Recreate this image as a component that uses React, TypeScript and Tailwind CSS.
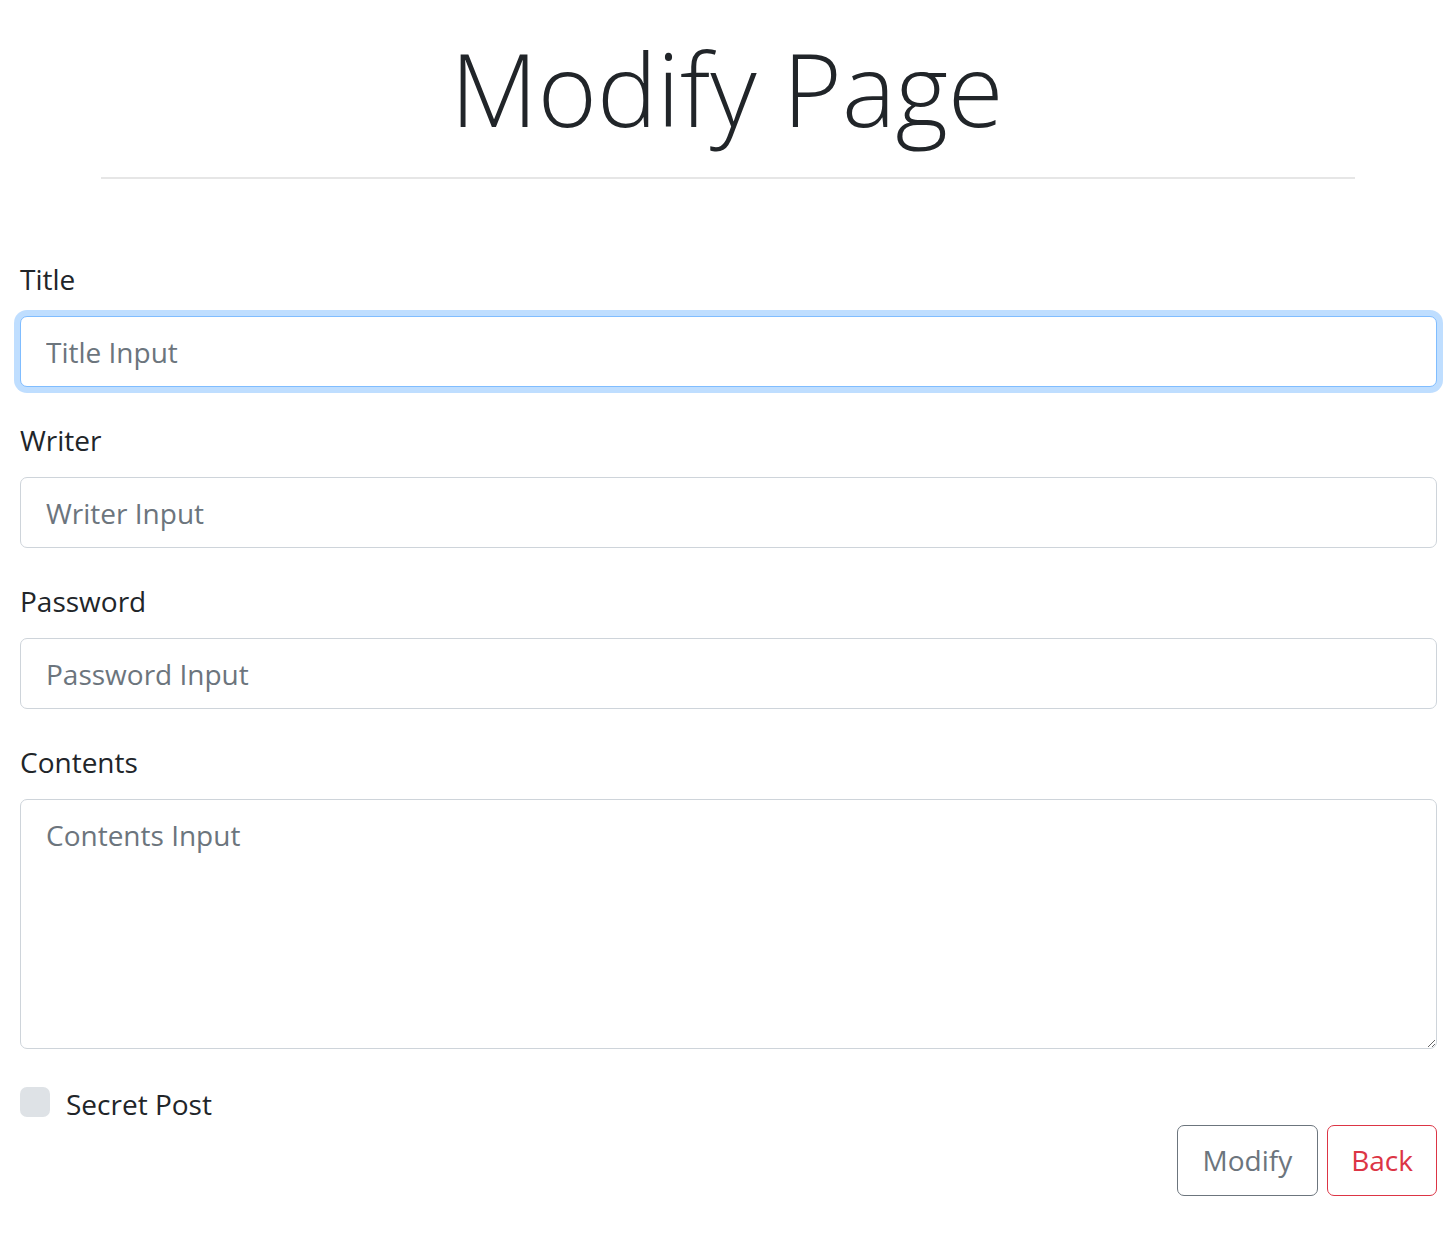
import React from 'react';

const fields = [
    { label: 'Title', placeholder: 'Title Input', focused: true },
    { label: 'Writer', placeholder: 'Writer Input', focused: false },
    { label: 'Password', placeholder: 'Password Input', focused: false },
];

const inputBase =
    'block w-full h-[71px] px-[25px] text-[28px] leading-[45px] text-[#495057] bg-white border rounded-[7px] outline-none placeholder:text-[#6c757d]';

const App: React.FC = () => {
    return (
        <div className="min-h-[1240px] bg-white text-[#212529] font-['Open_Sans',sans-serif]">
            <div className="pt-[25px]">
                <h1 className="text-center text-[101px] leading-[126px] font-light text-[#212529]">
                    Modify Page
                </h1>
                <hr className="ml-[101px] mr-[99px] mt-[26px] border-0 border-t-2 border-[#e6e6e6]" />
            </div>

            <form className="pl-[20px] pr-[17px] pt-[78px]" onSubmit={(e) => e.preventDefault()}>
                {fields.map((field) => (
                    <div key={field.label} className="mb-[31px]">
                        <label className="block text-[28px] leading-[45px] mb-[14px]">
                            {field.label}
                        </label>
                        <input
                            type={field.label === 'Password' ? 'password' : 'text'}
                            placeholder={field.placeholder}
                            className={`${inputBase} ${field.focused
                                ? 'border-[#80bdff] shadow-[0_0_0_6px_rgba(0,123,255,0.25)]'
                                : 'border-[#ced4da]'
                                }`}
                        />
                    </div>
                ))}

                <div className="mb-[30px]">
                    <label className="block text-[28px] leading-[45px] mb-[14px] mt-[2px]">Contents</label>
                    <textarea
                        rows={5}
                        placeholder="Contents Input"
                        className="block w-full h-[250px] px-[25px] py-[13px] text-[28px] leading-[45px] text-[#495057] bg-white border border-[#ced4da] rounded-[7px] outline-none resize-y placeholder:text-[#6c757d]"
                    />
                </div>

                <div className="flex items-center h-[46px] pt-[5px]">
                    <span className="w-[30px] h-[30px] rounded-[7px] bg-[#dee2e6] mr-[16px] -mt-[5px]" />
                    <span className="text-[28px] leading-[45px]">Secret Post</span>
                </div>

                <div className="flex justify-end gap-[9px]">
                    <button
                        type="submit"
                        className="h-[71px] px-[25px] text-[28px] leading-[45px] text-[#6c757d] border border-[#6c757d] rounded-[7px] bg-white"
                    >
                        Modify
                    </button>
                    <button
                        type="button"
                        className="h-[71px] px-[23px] text-[28px] leading-[45px] text-[#dc3545] border border-[#dc3545] rounded-[7px] bg-white"
                    >
                        Back
                    </button>
                </div>
            </form>
        </div>
    );
};

export default App;
